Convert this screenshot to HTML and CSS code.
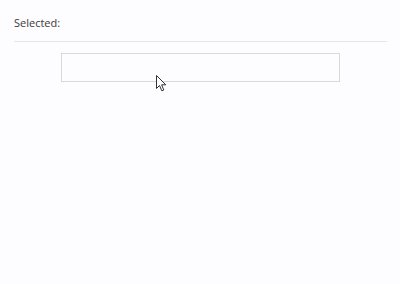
FILE: index.html
```html
<!DOCTYPE html>
<html>
<head>
<meta charset="utf-8">
<link rel="stylesheet" href="styles.css">
</head>
<body>
<div class="page">
  <div class="header">Selected:</div>
  <div class="content">
    <div class="box"></div>
  </div>
</div>
<svg class="cursor" width="12" height="18" viewBox="0 0 12 18">
  <path d="M0.5 0.5 L0.5 13.5 L3.5 10.5 L5.8 15.8 L7.8 15 L5.6 9.8 L9.8 9.8 Z" fill="#fff" stroke="#333" stroke-width="1" stroke-linejoin="miter"/>
</svg>
</body>
</html>
```
FILE: styles.css
```css
html, body {
  margin: 0;
  padding: 0;
  background: #fdfcfe;
  width: 400px;
  height: 284px;
  overflow: hidden;
}
.page {
  padding: 0 13px 0 14px;
  font-family: "Open Sans", "Noto Sans", sans-serif;
  font-size: 11px;
  color: #3a3a3a;
}
.header {
  height: 42px;
  line-height: 14px;
  padding-top: 16px;
  box-sizing: border-box;
  border-bottom: 1px solid #e6e6e8;
}
.content {
  display: flex;
  justify-content: center;
  padding-top: 11px;
  padding-right: 1px;
}
.box {
  width: 277px;
  height: 27px;
  border: 1px solid #d9d9db;
  background: #fdfcfe;
}
.cursor {
  position: absolute;
  left: 156px;
  top: 75px;
}
```
